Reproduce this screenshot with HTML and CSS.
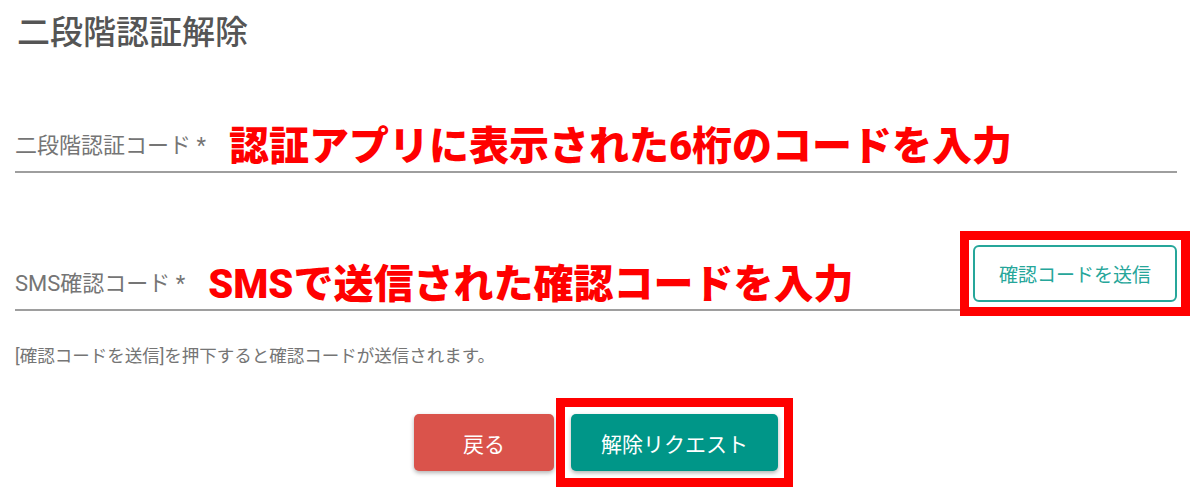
FILE: index.html
```html
<!DOCTYPE html>
<html lang="ja">
<head>
  <meta charset="UTF-8" />
  <meta name="viewport" content="width=device-width, initial-scale=1.0" />
  <title>二段階認証解除</title>
  <link rel="stylesheet" href="styles.css">
</head>
<body>
  <div class="page">
    <h1 class="title">二段階認証解除</h1>

    <!-- 二段階認証コード -->
    <div class="field field-code">
      <label class="field-label">二段階認証コード *</label>
      <span class="note">認証アプリに表示された6桁のコードを入力</span>
    </div>

    <!-- SMS確認コード -->
    <div class="sms-row">
      <div class="field field-sms">
        <label class="field-label">SMS確認コード *</label>
        <span class="note">SMSで送信された確認コードを入力</span>
      </div>
      <button class="btn-outline marked">確認コードを送信</button>
    </div>

    <p class="hint">[確認コードを送信]を押下すると確認コードが送信されます。</p>

    <div class="actions">
      <button class="btn btn-back">戻る</button>
      <button class="btn btn-request marked">解除リクエスト</button>
    </div>
  </div>
</body>
</html>
```

FILE: styles.css
```css
body {
  font-family: Roboto, 'Noto Sans CJK JP', sans-serif;
  margin: 0;
  padding: 0;
  background-color: #fff;
}
.page {
  padding: 14px 23px 21px 15px;
}
.title {
  margin: 0 0 0 2px;
  font-size: 33px;
  line-height: 38px;
  font-weight: 500;
  color: #555;
}
.field {
  display: flex;
  align-items: center;
  height: 56px;
  border-bottom: 2px solid #9e9e9e;
}
.field-code {
  margin-top: 63px;
}
.field-label {
  font-size: 22px;
  color: #757575;
}
.note {
  margin-left: 23px;
  font-size: 40px;
  font-weight: 900;
  color: #ff0000;
}
.sms-row {
  display: flex;
  align-items: flex-start;
  gap: 13px;
  margin-top: 80px;
}
.field-sms {
  flex: 1;
}
.btn-outline {
  width: 204px;
  height: 57px;
  margin-top: -8px;
  font-family: inherit;
  font-size: 19px;
  color: #26a69a;
  background-color: #fff;
  border: 2px solid #26a69a;
  border-radius: 6px;
}
/* 赤枠の注釈 */
.marked {
  position: relative;
}
.marked::after {
  content: '';
  position: absolute;
  top: -16px;
  right: -15px;
  bottom: -16px;
  left: -15px;
  border: 9px solid #ff0000;
  pointer-events: none;
}
.hint {
  margin: 33px 0 0;
  font-size: 17.5px;
  line-height: 24px;
  color: #757575;
}
.actions {
  display: flex;
  justify-content: center;
  gap: 17px;
  margin-top: 46px;
}
.btn {
  height: 57px;
  font-family: inherit;
  font-size: 21px;
  color: #fff;
  border: none;
  border-radius: 5px;
  box-shadow: 0 2px 4px rgba(0, 0, 0, 0.3);
}
.btn-back {
  width: 140px;
  background-color: #da534b;
}
.btn-request {
  width: 207px;
  background-color: #009688;
}
```
